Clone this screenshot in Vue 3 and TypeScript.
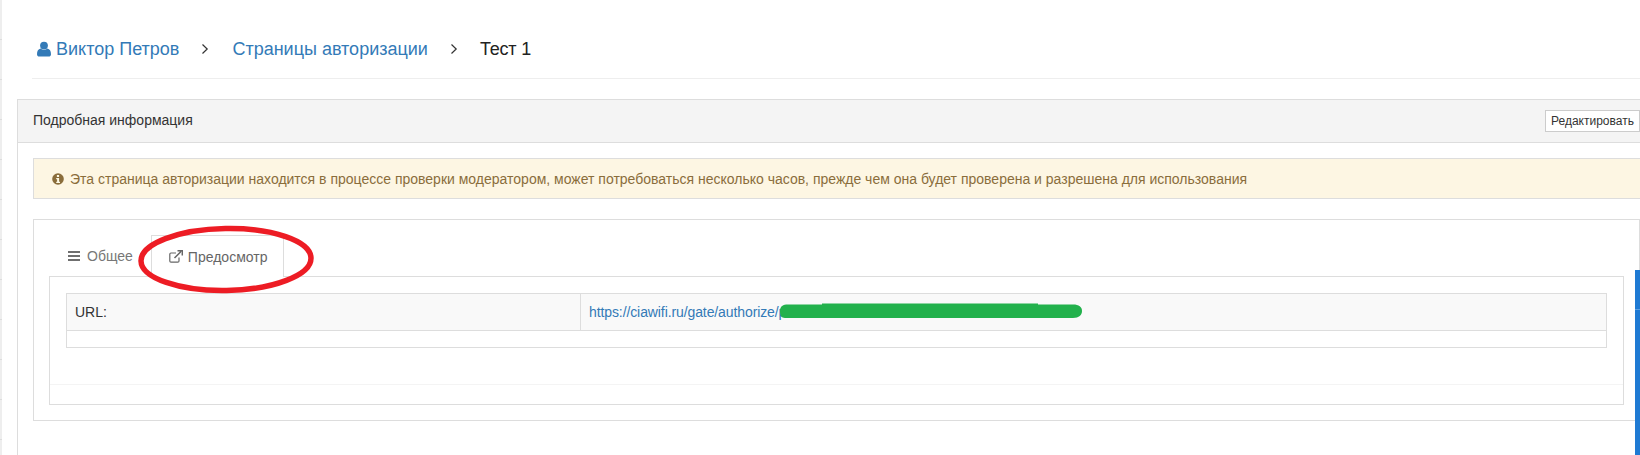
<script setup lang="ts">
const alertText = 'Эта страница авторизации находится в процессе проверки модератором, может потребоваться несколько часов, прежде чем она будет проверена и разрешена для использования'
</script>

<template>
  <div class="page">
    <nav class="crumbs">
      <a class="link user">
        <svg class="user-icon" viewBox="0 0 14 16" width="14" height="16"><circle cx="7" cy="4.6" r="3.9" fill="#337ab7"/><path d="M0 13.2C0 10 1.3 8.3 3.6 7.6 4.5 8.4 5.7 8.9 7 8.9s2.500-.5 3.400-1.300C12.700 8.300 14 10 14 13.200 14 14.800 13 15.600 11.600 15.600H2.400C1 15.600 0 14.800 0 13.200Z" fill="#337ab7"/></svg>
        Виктор Петров
      </a>
      <svg class="chev" viewBox="0 0 8 12" width="8" height="12"><path d="M1.500 1.500 6.200 6 1.500 10.500" fill="none" stroke="#333" stroke-width="1.200"/></svg>
      <a class="link">Страницы авторизации</a>
      <svg class="chev" viewBox="0 0 8 12" width="8" height="12"><path d="M1.500 1.500 6.200 6 1.500 10.500" fill="none" stroke="#333" stroke-width="1.200"/></svg>
      <span class="current">Тест 1</span>
    </nav>

    <section class="panel">
      <header class="panel-head">
        <span>Подробная информация</span>
        <button class="edit" type="button">Редактировать</button>
      </header>
      <div class="panel-body">
        <div class="alert">
          <svg class="info" viewBox="0 0 12 12" width="12" height="12"><circle cx="6" cy="6" r="5.800" fill="#8a6d3b"/><rect x="4.900" y="2" width="2.200" height="2" fill="#fcf8e3"/><path d="M4.200 5h2.900v3.800h.9V10H4.200V8.800h.9V6.200h-.9Z" fill="#fcf8e3"/></svg>
          <span>{{ alertText }}</span>
        </div>

        <div class="box">
          <div class="tabs">
            <a class="tab first">
              <svg viewBox="0 0 12 10" width="12" height="10"><path d="M0 0h12v2H0zM0 4h12v2H0zM0 8h12v2H0z" fill="#6f6f6f"/></svg>
              Общее
            </a>
            <a class="tab active">
              <svg viewBox="0 0 14 13" width="14" height="13"><path d="M10 7.500V11a1.200 1.200 0 0 1-1.200 1.200H2A1.200 1.200 0 0 1 .8 11V4.200A1.200 1.200 0 0 1 2 3h5" fill="none" stroke="#666" stroke-width="1.200"/><path d="M5.500 8 12 1.500M8.500 .7H13.300V5.500" fill="none" stroke="#666" stroke-width="1.500"/></svg>
              Предосмотр
            </a>
          </div>
          <div class="pane">
            <div class="pane-content">
              <table class="info-table">
                <tbody>
                  <tr class="shaded">
                    <td class="c1">URL:</td>
                    <td class="c2"><a class="url">https://ciawifi.ru/gate/authorize/p</a></td>
                  </tr>
                  <tr class="empty"><td colspan="2"></td></tr>
                </tbody>
              </table>
            </div>
            <div class="pane-foot"></div>
          </div>
        </div>
      </div>
    </section>

    <div class="sidebar-edge"></div>
    <div class="scrollbar"></div>
    <svg class="scribble" viewBox="0 0 302 16" width="302" height="16"><path d="M0 8C0 3 3 1.500 8 1.500H42V.5H258V1.500H293C299 1.500 302 4 302 8S299 15 293 15H5C1 15 0 12 0 8Z" fill="#22b14c"/></svg>
    <svg class="ellipse" viewBox="0 0 176 70" width="176" height="70"><ellipse cx="88" cy="34.500" rx="85" ry="31" fill="none" stroke="#ed1c24" stroke-width="5.500" transform="rotate(-1 88 34.500)"/></svg>
  </div>
</template>

<style>
html, body { margin: 0; background: #fff; overflow: hidden; }
</style>

<style scoped>
.page { position: relative; width: 1640px; height: 455px; overflow: hidden; box-sizing: border-box; padding: 0 0 0 17px; font-family: "Liberation Sans", Arial, sans-serif; color: #333; font-size: 14px; }
.crumbs { margin-left: 15px; height: 79px; box-sizing: border-box; padding-top: 37px; border-bottom: 1px solid #eee; display: flex; align-items: flex-start; font-size: 18px; line-height: 24px; }
.link { color: #337ab7; }
.user { display: inline-flex; align-items: center; gap: 5px; margin-left: 5px; }
.chev { margin: 6px 0 0 22px; }
.chev + .link { margin-left: 23px; }
.chev + .current { margin-left: 22px; }
.current { color: #222; letter-spacing: -0.2px; }
.panel { margin-top: 20px; border: 1px solid #ddd; border-right: 0; border-bottom: 0; height: 400px; }
.panel-head { height: 43px; box-sizing: border-box; background: #f4f4f4; border-bottom: 1px solid #ddd; display: flex; align-items: center; justify-content: space-between; padding: 0 0 0 15px; }
.panel-head > span { position: relative; top: -1px; }
.edit { width: 95px; height: 22px; padding: 0; background: #fff; border: 1px solid #ccc; color: #333; font: 12px "Liberation Sans", Arial, sans-serif; }
.panel-body { padding: 15px 0 0 15px; }
.alert { height: 41px; box-sizing: border-box; display: flex; align-items: center; gap: 6px; background: #fdf6e3; border: 1px solid #ddd; border-right: 0; padding-left: 18px; color: #8a6d3b; font-size: 14px; }
.box { margin: 20px 0 0 0; height: 202px; box-sizing: border-box; border: 1px solid #ddd; padding: 15px 15px 0 15px; }
.tabs { display: flex; height: 41px; }
.tab { display: flex; align-items: center; gap: 6px; height: 41px; box-sizing: border-box; color: #777; }
.tab.first { margin-left: 2px; padding: 0 18px 0 17px; gap: 7px; }
.tab.active { border: 1px solid #ddd; border-bottom: 0; margin-bottom: -1px; height: 42px; background: #fff; position: relative; padding: 0 16px 0 17px; gap: 5px; color: #666; }
.pane { height: 129px; box-sizing: border-box; border: 1px solid #ddd; display: flex; flex-direction: column; }
.pane-content { height: 108px; padding: 16px 16px 0 16px; box-sizing: border-box; border-bottom: 1px solid #f4f4f4; }
.pane-foot { flex: 1; }
.info-table { width: 100%; border-collapse: collapse; table-layout: fixed; }
.info-table td { border: 1px solid #ddd; padding: 0; }
.shaded { background: #f9f9f9; height: 37px; }
.empty { height: 17px; }
.c1 { width: 505px; padding-left: 8px !important; }
.c2 { padding-left: 8px !important; }
.url { color: #337ab7; letter-spacing: -0.1px; }
.sidebar-edge { position: absolute; left: 0; top: 0; bottom: 0; width: 2px; background: repeating-linear-gradient(#eee 0 39px, #ddd 39px 40px); }
.scrollbar { position: absolute; right: 0; top: 270px; bottom: 0; width: 5px; background: #1f7ad3; }
.scrollbar::after { content: ""; position: absolute; left: 0; right: 0; top: 39px; height: 1px; background: #5a9fe3; }
.scribble { position: absolute; left: 780px; top: 303px; }
.ellipse { position: absolute; left: 138px; top: 225px; }
</style>
